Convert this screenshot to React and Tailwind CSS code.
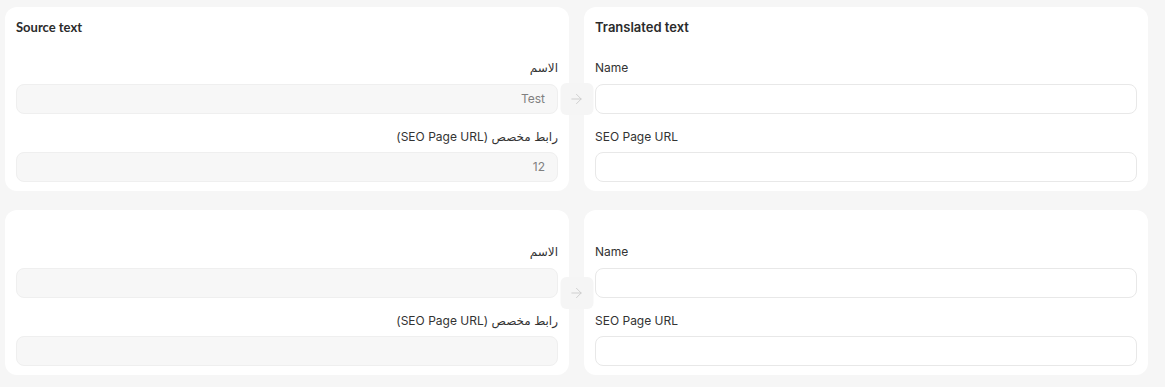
import { ArrowRight } from 'lucide-react';

const rows = [
  {
    id: 1,
    showTitle: true,
    source: [
      { label: 'الاسم', value: 'Test' },
      { label: 'رابط مخصص (SEO Page URL)', value: '12' },
    ],
    target: [{ label: 'Name' }, { label: 'SEO Page URL' }],
  },
  {
    id: 2,
    showTitle: false,
    source: [
      { label: 'الاسم', value: '' },
      { label: 'رابط مخصص (SEO Page URL)', value: '' },
    ],
    target: [{ label: 'Name' }, { label: 'SEO Page URL' }],
  },
];

const sans = { fontFamily: 'Inter, "DejaVu Sans", sans-serif' };

export default function App() {
  return (
    <div className="min-h-[387px] bg-[#f6f6f6] pt-[7px] pl-[5px] pr-[17px] pb-[11px]" style={sans}>
      <div className="flex flex-col gap-[19px]">
        {rows.map((row) => (
          <div key={row.id} className="relative grid grid-cols-2 gap-[15px]">
            {/* Source card */}
            <div className="rounded-[12px] bg-white px-[11px] pt-[11px] pb-[9px]">
              {row.showTitle && (
                <h3
                  className="h-[19px] text-[13px] font-bold leading-[19px] text-[#2b2b2b]"
                  style={{ fontFamily: 'Lato, sans-serif' }}
                >
                  Source text
                </h3>
              )}
              <div dir="rtl" className="flex flex-col pt-[22px]">
                {row.source.map((f, i) => (
                  <div key={i} className={i > 0 ? 'mt-[14px]' : ''}>
                    <label className="block text-[12px] leading-[18px] text-[#333]">{f.label}</label>
                    <div className={`${i > 0 ? 'mt-[6px]' : 'mt-[7px]'} flex h-[30px] items-center rounded-[8px] border border-[#efefef] bg-[#f7f7f7] px-[12px] text-[12px] text-[#808080]`}>
                      {f.value}
                    </div>
                  </div>
                ))}
              </div>
            </div>

            {/* Translated card */}
            <div className="rounded-[12px] bg-white px-[11px] pt-[11px] pb-[9px]">
              {row.showTitle && (
                <h3 className="h-[19px] text-[13px] font-semibold leading-[19px] text-[#2b2b2b]">
                  Translated text
                </h3>
              )}
              <div className="flex flex-col pt-[22px]">
                {row.target.map((f, i) => (
                  <div key={i} className={i > 0 ? 'mt-[14px]' : ''}>
                    <label className="block text-[12px] leading-[18px] text-[#333]">{f.label}</label>
                    <input
                      type="text"
                      className={`${i > 0 ? 'mt-[6px]' : 'mt-[7px]'} block h-[30px] w-full rounded-[8px] border border-[#e8e8e8] bg-white px-[12px] text-[12px] outline-none`}
                    />
                  </div>
                ))}
              </div>
            </div>

            {/* Arrow */}
            <div className="absolute left-1/2 top-1/2 flex h-[32px] w-[33px] -translate-x-1/2 -translate-y-1/2 items-center justify-center rounded-[6px] bg-[#f5f5f5]">
              <ArrowRight className="h-[16px] w-[16px] text-[#c8c8c8]" strokeWidth={1.25} />
            </div>
          </div>
        ))}
      </div>
    </div>
  );
}
